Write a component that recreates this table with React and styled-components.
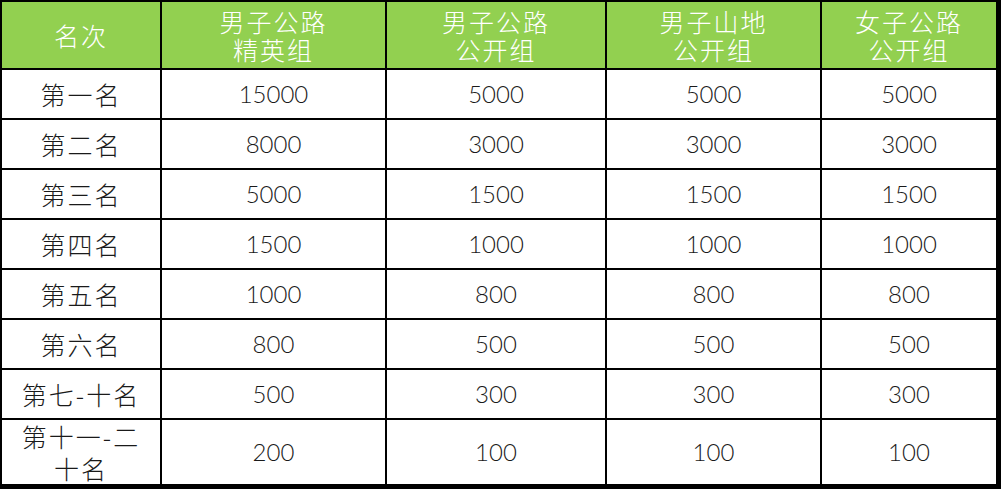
import React from "react";
import styled, { createGlobalStyle } from "styled-components";

const GlobalStyle = createGlobalStyle`
  html, body {
    margin: 0;
    padding: 0;
    background: #ffffff;
  }
`;

const Table = styled.div`
  display: grid;
  grid-template-columns: 158px 223px 218px 213px 174px;
  grid-template-rows: 66px repeat(7, 48px) 64px;
  gap: 2px;
  padding: 2px 5px 5px 2px;
  width: 1001px;
  height: 489px;
  box-sizing: border-box;
  background: #000000;
`;

const HeadCell = styled.div`
  display: flex;
  flex-direction: column;
  align-items: center;
  justify-content: center;
  background: #92d050;
  color: #ffffff;
  font-family: "Noto Sans CJK SC", "Noto Sans", sans-serif;
  font-weight: 300;
  font-size: 25px;
  line-height: 28px;
  letter-spacing: 2px;
  text-align: center;
`;

const Cell = styled.div`
  display: flex;
  align-items: center;
  justify-content: center;
  background: #ffffff;
  color: #1a1a1a;
  text-align: center;
  font-family: ${(p) =>
    p.$cjk
      ? `"Noto Sans CJK SC", "Noto Sans", sans-serif`
      : `Lato, "Noto Sans", sans-serif`};
  font-weight: 300;
  font-size: ${(p) => (p.$cjk ? "25px" : "24px")};
  line-height: ${(p) => (p.$cjk ? "32px" : "28px")};
  letter-spacing: ${(p) => (p.$cjk ? "2px" : "0")};
`;

const headers = [
  ["名次"],
  ["男子公路", "精英组"],
  ["男子公路", "公开组"],
  ["男子山地", "公开组"],
  ["女子公路", "公开组"],
];

const rows = [
  [["第一名"], "15000", "5000", "5000", "5000"],
  [["第二名"], "8000", "3000", "3000", "3000"],
  [["第三名"], "5000", "1500", "1500", "1500"],
  [["第四名"], "1500", "1000", "1000", "1000"],
  [["第五名"], "1000", "800", "800", "800"],
  [["第六名"], "800", "500", "500", "500"],
  [["第七-十名"], "500", "300", "300", "300"],
  [["第十一-二", "十名"], "200", "100", "100", "100"],
];

const Lines = ({ lines }) =>
  lines.map((l, i) => (
    <React.Fragment key={i}>
      {i > 0 && <br />}
      {l}
    </React.Fragment>
  ));

const App = () => {
  return (
    <>
      <GlobalStyle />
      <Table>
        {headers.map((h, i) => (
          <HeadCell key={i}>
            {h.map((line, j) => (
              <span key={j}>{line}</span>
            ))}
          </HeadCell>
        ))}
        {rows.map((row, r) =>
          row.map((v, c) =>
            c === 0 ? (
              <Cell key={`${r}-${c}`} $cjk>
                <span>
                  <Lines lines={v} />
                </span>
              </Cell>
            ) : (
              <Cell key={`${r}-${c}`}>{v}</Cell>
            )
          )
        )}
      </Table>
    </>
  );
};

export default App;
